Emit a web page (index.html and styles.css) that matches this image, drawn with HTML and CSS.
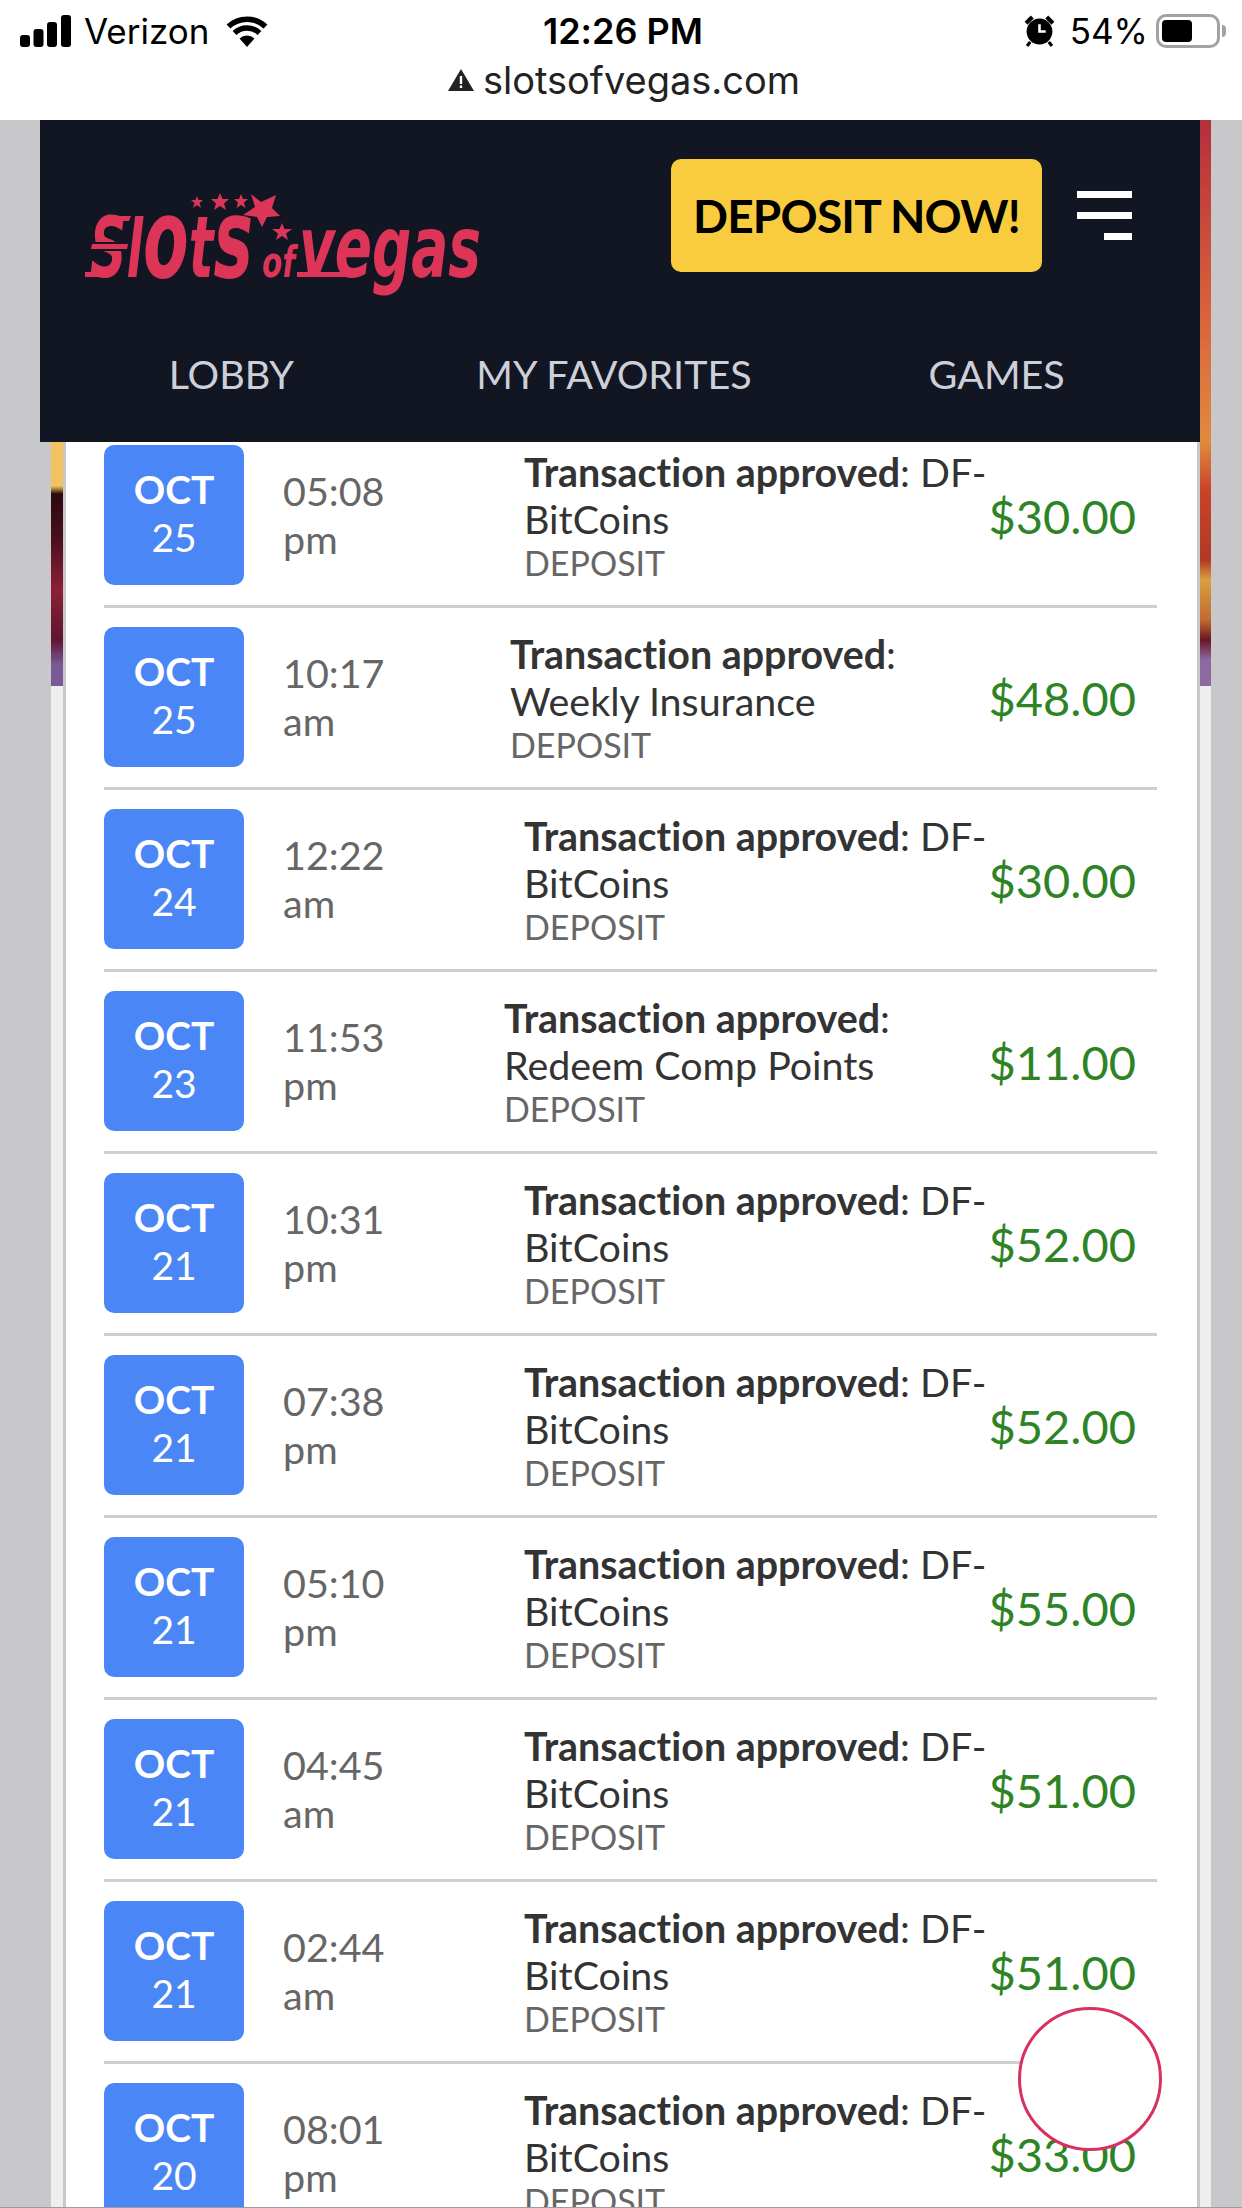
FILE: index.html
```html
<!DOCTYPE html>
<html lang="en">
<head>
    <meta charset="UTF-8">
    <meta name="viewport" content="width=device-width, initial-scale=1.0">
    <title>Slots of Vegas</title>
    <link rel="stylesheet" href="styles.css">
</head>
<body>
    <!-- Phone status bar and address -->
    <div class="status-bar">
        <div class="status-top">
            <div class="status-left">
                <svg class="signal" width="52" height="32" viewBox="0 0 52 32">
                    <rect x="0" y="20" width="10" height="12" rx="3"/>
                    <rect x="13.500" y="14" width="10" height="18" rx="3"/>
                    <rect x="27" y="7" width="10" height="25" rx="3"/>
                    <rect x="41" y="0" width="10" height="32" rx="3"/>
                </svg>
                <span>Verizon</span>
                <svg class="wifi" width="46" height="32" viewBox="0 0 44 32">
                    <path d="M22 32 L14.500 23.500 A11 11 0 0 1 29.500 23.500 Z"/>
                    <path d="M9.500 18 A18 18 0 0 1 34.500 18" fill="none" stroke="#000" stroke-width="5.500"/>
                    <path d="M3.500 11.500 A27 27 0 0 1 40.500 11.500" fill="none" stroke="#000" stroke-width="5.500"/>
                </svg>
            </div>
            <div class="status-time">12:26 PM</div>
            <div class="status-right">
                <svg class="alarm" width="31" height="32" viewBox="0 0 30 31">
                    <circle cx="15" cy="16" r="12.500"/>
                    <path d="M15 9 V16 H21" fill="none" stroke="#fff" stroke-width="2.500"/>
                    <path d="M2 8 L8 2 M22 2 L28 8" stroke="#000" stroke-width="4"/>
                    <path d="M6 26 L3 30 M24 26 L27 30" stroke="#000" stroke-width="3"/>
                </svg>
                <span>54%</span>
                <div class="battery"><div class="battery-fill"></div></div>
                <div class="battery-nub"></div>
            </div>
        </div>
        <div class="address">
            <svg width="26" height="22" viewBox="0 0 26 22">
                <path d="M13 0 L26 22 H0 Z" fill="#222"/>
                <rect x="11.800" y="7" width="2.400" height="8" fill="#fff"/>
                <rect x="11.800" y="16.500" width="2.400" height="2.500" fill="#fff"/>
            </svg>
            <span>slotsofvegas.com</span>
        </div>
    </div>

    <div class="sheet">
        <header class="header">
            <div class="header-top">
                <svg class="logo" width="400" height="104" viewBox="0 0 400 104">
                    <!-- estrellas -->
                    <polygon class="logo-mark" points="112,3 113.500,7 118,7 114.500,10 116,15 112,12 108,15 109.500,10 106,7 110.500,7"/>
                    <polygon class="logo-mark" points="135,0 137.500,6 144,6 139,10.500 141,17 135,13 129,17 131,10.500 126,6 132.500,6"/>
                    <polygon class="logo-mark" points="156,1 158,6 163,6 159,9.500 160.500,15 156,12 151.500,15 153,9.500 149,6 154,6"/>
                    <polygon class="logo-mark" points="166,1 176,9 191,2 187,15 195,23 182,24 177,34 172,24 158,22 170,14"/>
                    <polygon class="logo-mark" points="197,30 199.500,36 207,36 201,40.500 203,47 197,43 191,47 193,40.500 187,36 194.500,36"/>
                    <text class="logo-text" x="5" y="84" textLength="163" lengthAdjust="spacingAndGlyphs"><tspan class="big-s">S</tspan><tspan class="big-l">l</tspan><tspan class="big-o">o</tspan><tspan class="big-t">t</tspan><tspan class="big-o">s</tspan></text>
                    <text class="logo-small" x="177" y="84" textLength="33" lengthAdjust="spacingAndGlyphs">of</text>
                    <text class="logo-vegas" x="214" y="84" textLength="182" lengthAdjust="spacingAndGlyphs">vegas</text>
                    <rect class="logo-cut" x="6" y="49" width="36" height="9"/>
                    <polygon class="logo-mark" points="7,51 43,51 42,56 6,56"/>
                    <polygon class="logo-mark" points="22,23 46,23 44,28 22,28"/>
                    <polygon class="logo-mark" points="0,79 26,79 24,84 0,84"/>
                    <polygon class="logo-mark" points="212,79 270,79 268,84 212,84"/>
                </svg>
                <a class="deposit-btn">DEPOSIT NOW!</a>
                <div class="burger">
                    <span></span>
                    <span></span>
                    <span class="short"></span>
                </div>
            </div>
            <nav class="nav">
                <a>LOBBY</a>
                <a>MY FAVORITES</a>
                <a>GAMES</a>
            </nav>
        </header>

        <div class="card">
            <div class="row">
                <div class="date"><b>OCT</b><span>25</span></div>
                <div class="time">05:08<br>pm</div>
                <div class="desc"><b>Transaction approved</b>: DF-<br>BitCoins<small>DEPOSIT</small></div>
                <div class="amount">$30.00</div>
            </div>
            <div class="row">
                <div class="date"><b>OCT</b><span>25</span></div>
                <div class="time">10:17<br>am</div>
                <div class="desc desc-weekly"><b>Transaction approved</b>:<br>Weekly Insurance<small>DEPOSIT</small></div>
                <div class="amount">$48.00</div>
            </div>
            <div class="row">
                <div class="date"><b>OCT</b><span>24</span></div>
                <div class="time">12:22<br>am</div>
                <div class="desc"><b>Transaction approved</b>: DF-<br>BitCoins<small>DEPOSIT</small></div>
                <div class="amount">$30.00</div>
            </div>
            <div class="row">
                <div class="date"><b>OCT</b><span>23</span></div>
                <div class="time">11:53<br>pm</div>
                <div class="desc desc-redeem"><b>Transaction approved</b>:<br>Redeem Comp Points<small>DEPOSIT</small></div>
                <div class="amount">$11.00</div>
            </div>
            <div class="row">
                <div class="date"><b>OCT</b><span>21</span></div>
                <div class="time">10:31<br>pm</div>
                <div class="desc"><b>Transaction approved</b>: DF-<br>BitCoins<small>DEPOSIT</small></div>
                <div class="amount">$52.00</div>
            </div>
            <div class="row">
                <div class="date"><b>OCT</b><span>21</span></div>
                <div class="time">07:38<br>pm</div>
                <div class="desc"><b>Transaction approved</b>: DF-<br>BitCoins<small>DEPOSIT</small></div>
                <div class="amount">$52.00</div>
            </div>
            <div class="row">
                <div class="date"><b>OCT</b><span>21</span></div>
                <div class="time">05:10<br>pm</div>
                <div class="desc"><b>Transaction approved</b>: DF-<br>BitCoins<small>DEPOSIT</small></div>
                <div class="amount">$55.00</div>
            </div>
            <div class="row">
                <div class="date"><b>OCT</b><span>21</span></div>
                <div class="time">04:45<br>am</div>
                <div class="desc"><b>Transaction approved</b>: DF-<br>BitCoins<small>DEPOSIT</small></div>
                <div class="amount">$51.00</div>
            </div>
            <div class="row">
                <div class="date"><b>OCT</b><span>21</span></div>
                <div class="time">02:44<br>am</div>
                <div class="desc"><b>Transaction approved</b>: DF-<br>BitCoins<small>DEPOSIT</small></div>
                <div class="amount">$51.00</div>
            </div>
            <div class="row">
                <div class="date"><b>OCT</b><span>20</span></div>
                <div class="time">08:01<br>pm</div>
                <div class="desc"><b>Transaction approved</b>: DF-<br>BitCoins<small>DEPOSIT</small></div>
                <div class="amount">$33.00</div>
            </div>
        </div>
    </div>

    <!-- Boton flotante -->
    <div class="float-btn"></div>
    <div class="bottom-line"></div>
</body>
</html>
```

FILE: styles.css
```css
html, body {
    height: 2208px;
}
body {
    margin: 0;
    background: #c8c8ca;
    font-family: 'Lato', sans-serif;
    font-variant-ligatures: none;
    overflow: hidden;
    position: relative;
}
.status-bar {
    background: #fff;
    height: 120px;
    color: #000;
    font-family: 'Inter', 'Liberation Sans', sans-serif;
}
.status-top {
    display: grid;
    grid-template-columns: 1fr auto 1fr;
    align-items: center;
    height: 62px;
    padding: 0 16px 0 20px;
    font-size: 35px;
}
.status-left, .status-right {
    display: flex;
    align-items: center;
}
.status-left span {
    margin: 0 15px 0 12px;
}
.status-right {
    justify-content: flex-end;
}
.status-right span {
    margin: 0 8px 0 15px;
}
.status-time {
    font-weight: 600;
    font-size: 36px;
}
.battery {
    width: 64px;
    height: 34px;
    box-sizing: border-box;
    border: 3px solid #a2a2a2;
    border-radius: 10px;
    padding: 3px;
}
.battery-fill {
    width: 30px;
    height: 100%;
    background: #000;
    border-radius: 4px;
}
.battery-nub {
    width: 4px;
    height: 12px;
    margin-left: 2px;
    background: #a2a2a2;
    border-radius: 0 4px 4px 0;
}
.address {
    display: flex;
    justify-content: center;
    align-items: center;
    gap: 9px;
    margin-top: -5px;
    padding-left: 6px;
    font-size: 38px;
    color: #222;
}
.sheet {
    margin-left: 51px;
    width: 1160px;
    height: 2088px;
    background-color: #eee;
    background-image:
        linear-gradient(#f2c35f 0, #f2c35f 366px, #2a0a0c 374px, #4d0f1f 420px, #8b2038 470px, #5f1530 520px, #7a5a96 545px, #7a5a96 566px),
        linear-gradient(#b52e3c 0, #d9653c 200px, #e08a40 322px, #c8432a 370px, #b03a25 440px, #d9a040 460px, #c06a30 500px, #6a1526 520px, #8a6aa0 540px, #8a6aa0 566px);
    background-size: 12px 566px, 11px 566px;
    background-position: left top, right top;
    background-repeat: no-repeat;
}
.header {
    margin-left: -11px;
    width: 1160px;
    height: 322px;
    background: #121522;
}
.header-top {
    display: flex;
    align-items: flex-start;
    padding-top: 39px;
}
.logo {
    margin: 34px 0 0 45px;
    flex: none;
    overflow: visible;
}
.logo-mark {
    fill: #dd3558;
}
.logo-cut {
    fill: #121522;
}
.logo-text, .logo-vegas, .logo-small {
    font-family: 'DejaVu Sans', sans-serif;
    font-weight: 700;
    font-style: oblique;
    fill: #dd3558;
}
.logo-vegas {
    font-size: 86px;
}
.logo-small {
    font-size: 42px;
}
.big-s {
    font-size: 84px;
}
.big-l {
    font-size: 80px;
}
.big-o {
    font-size: 110px;
}
.big-t {
    font-size: 86px;
}
.deposit-btn {
    margin-left: 186px;
    width: 371px;
    height: 113px;
    display: flex;
    align-items: center;
    justify-content: center;
    background: #f9cc3f;
    border-radius: 10px;
    color: #000;
    font-size: 46px;
    font-weight: 700;
    letter-spacing: -0.8px;
}
.burger {
    margin: 32px 0 0 35px;
    width: 55px;
    display: flex;
    flex-direction: column;
    align-items: flex-end;
    gap: 14px;
}
.burger span {
    width: 55px;
    height: 7px;
    background: #fff;
}
.burger span.short {
    width: 28px;
}
.nav {
    display: grid;
    grid-template-columns: repeat(3, 1fr);
    margin-top: 53px;
    padding-right: 12px;
    text-align: center;
    font-size: 39.5px;
    color: #cdd0d8;
}
.card {
    margin: 0 11px 0 12px;
    height: 1766px;
    box-sizing: border-box;
    background: #fff;
    border-left: 3px solid #c8c8c8;
    border-right: 3px solid #c8c8c8;
    padding: 3px 40px 0 38px;
    overflow: hidden;
}
.row {
    display: grid;
    grid-template-columns: 140px 280px 464px 1fr;
    align-items: center;
    padding-bottom: 20px;
    margin-bottom: 19px;
    border-bottom: 3px solid #cfcfcf;
    padding-right: 21px;
}
.date {
    width: 140px;
    height: 140px;
    box-sizing: border-box;
    padding-bottom: 4px;
    display: flex;
    flex-direction: column;
    justify-content: center;
    align-items: center;
    background: #4a86f5;
    border-radius: 10px;
    color: #fff;
    font-size: 39px;
    line-height: 48px;
}
.time {
    padding-left: 39px;
    color: #666;
    font-size: 39.5px;
    line-height: 48px;
}
.desc {
    color: #333;
    font-size: 39.4px;
    line-height: 47px;
}
.desc small {
    display: block;
    color: #666;
    font-size: 34px;
    line-height: 41px;
}
.desc-weekly {
    margin-left: -14px;
}
.desc-redeem {
    margin-left: -20px;
}
.amount {
    text-align: right;
    color: #2e8425;
    font-size: 47px;
    line-height: 56px;
    padding-top: 1px;
}
.float-btn {
    position: absolute;
    left: 1018px;
    top: 2007px;
    width: 144px;
    height: 144px;
    box-sizing: border-box;
    background: #fff;
    border: 3px solid #d9305f;
    border-radius: 50%;
}
.bottom-line {
    position: absolute;
    left: 0;
    right: 0;
    bottom: 0;
    height: 1px;
    background: #9a9ca4;
}
```
